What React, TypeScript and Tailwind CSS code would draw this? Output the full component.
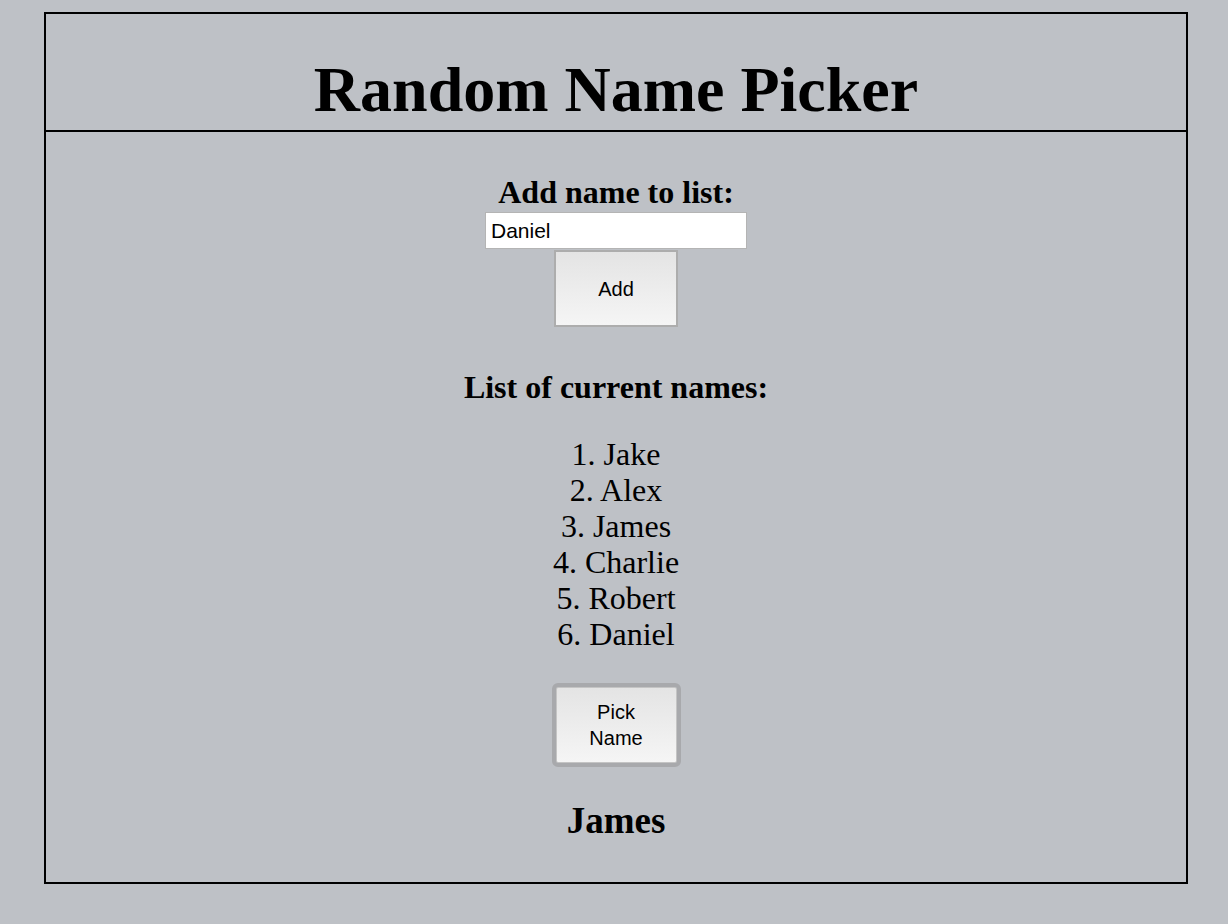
import React from "react";

const names = ["Jake", "Alex", "James", "Charlie", "Robert", "Daniel"];

export default function App() {
  return (
    <div className="min-h-[924px] bg-[#bec1c6] pl-[44px] pr-[40px] pt-[12px] font-['Liberation_Serif',serif] text-black">
      <div className="border-2 border-black">
        <header className="border-b-2 border-black pt-[44px] pb-[8px] text-center">
          <h1 className="text-[64px] font-bold leading-[64px]">Random Name Picker</h1>
        </header>
        <main className="flex flex-col items-center pt-[42px] pb-[41px]">
          <h2 className="text-[32px] font-bold leading-[36px]">Add name to list:</h2>
          <input
            className="mt-[2px] h-[37px] w-[262px] border border-[#b4b4b4] bg-white px-[5px] font-['Liberation_Sans',sans-serif] text-[21px] text-black outline-none"
            defaultValue="Daniel"
          />
          <button className="mt-[1px] h-[77px] w-[124px] border-2 border-[#adadad] bg-linear-to-b from-[#e4e4e4] to-[#f5f5f5] font-['Liberation_Sans',sans-serif] text-[20px] leading-[26px] text-black">
            Add
          </button>
          <h2 className="mt-[42px] text-[32px] font-bold leading-[36px]">List of current names:</h2>
          <ol className="mt-[31px] text-center text-[32px] leading-[36px]">
            {names.map((n, i) => (
              <li key={n}>
                {i + 1}. {n}
              </li>
            ))}
          </ol>
          <button className="mt-[35px] h-[76px] w-[121px] rounded-[2px] border border-[#c4c4c4] bg-linear-to-b from-[#e4e4e4] to-[#f5f5f5] font-['Liberation_Sans',sans-serif] text-[20px] leading-[26px] text-black outline-4 outline-[#a8a9ac]">
            Pick
            <br />
            Name
          </button>
          <p className="mt-[38px] text-[37px] font-bold leading-[40px]">James</p>
        </main>
      </div>
    </div>
  );
}
